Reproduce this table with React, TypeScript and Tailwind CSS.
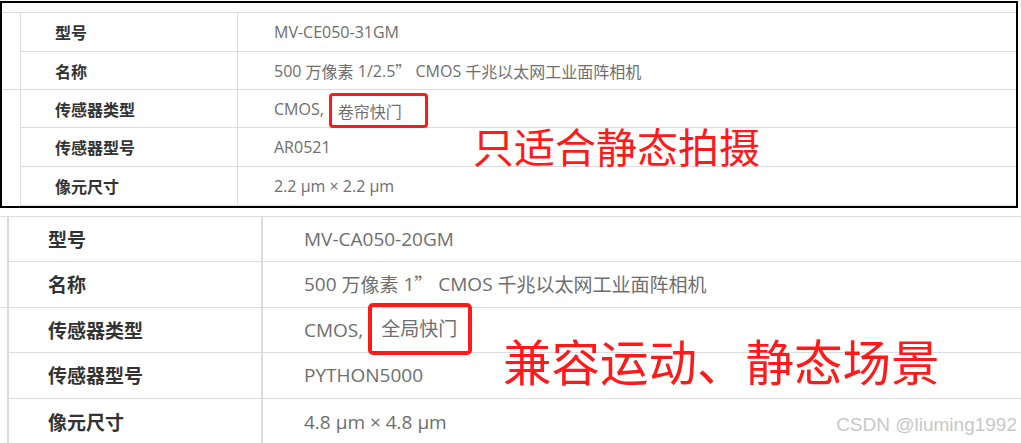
import React from "react";

const CJK = "font-['Noto_Sans_CJK_SC','Noto_Sans',sans-serif]";

type Row = { label: string; value: React.ReactNode; ext?: boolean; h: string };

function Table({
  rows,
  spacer,
  labelCls,
  valueCls,
  last,
}: {
  rows: Row[];
  spacer: string;
  labelCls: string;
  valueCls: string;
  last: boolean;
}) {
  return (
    <div className="flex flex-col border-t border-[#dcdcdc]">
      {rows.map((r, i) => (
        <div key={i} className={`flex ${r.h}`}>
          <div className={`${spacer} shrink-0 ${r.ext ? "border-b border-[#dcdcdc]" : ""}`} />
          <div className={`flex-1 flex ${i < rows.length - 1 || last ? "border-b border-[#dcdcdc]" : ""}`}>
            <div className={`${labelCls} shrink-0 flex items-center font-bold text-[#333] font-['Noto_Sans_CJK_SC','Noto_Sans',sans-serif]`}>
              {r.label}
            </div>
            <div className={`${valueCls} flex-1 flex items-center text-[#6e6e6e] whitespace-pre font-['Open_Sans','Noto_Sans_CJK_SC',sans-serif]`}>
              {r.value}
            </div>
          </div>
        </div>
      ))}
    </div>
  );
}

function Top() {
  const rows: Row[] = [
    { label: "型号", value: "MV-CE050-31GM", h: "h-[39px]" },
    {
      label: "名称",
      value: (
        <>
          500 <span className={CJK}>万像素</span> 1/2.5<span className={CJK}>”</span> CMOS{" "}
          <span className={CJK}>千兆以太网工业面阵相机</span>
        </>
      ),
      h: "h-[38px]",
      ext: true,
    },
    {
      label: "传感器类型",
      value: (
        <>
          CMOS,
          <span className={`ml-[5px] mt-[4px] inline-flex items-center h-[35px] pl-[6px] pr-[23px] border-[3px] border-[#ff1a1a] rounded-[4px] ${CJK}`}>
            卷帘快门
          </span>
        </>
      ),
      h: "h-[38px]",
    },
    { label: "传感器型号", value: "AR0521", h: "h-[39px]" },
    { label: "像元尺寸", value: "2.2 µm × 2.2 µm", h: "h-[39px]" },
  ];
  return (
    <div className="pt-px">
      <div className="relative w-[1018px] h-[207px] border-2 border-black pt-[9px]">
        <Table
          rows={rows}
          spacer="w-[18px]"
          labelCls="w-[218px] border-l border-r border-[#dcdcdc] pl-[34px] text-[16px]"
          valueCls="pl-[36px] text-[16px]"
          last
        />
        <div className={`absolute left-[471px] top-[114px] text-[41px] leading-[56px] text-[#ff1a1a] whitespace-nowrap ${CJK}`}>
          只适合静态拍摄
        </div>
      </div>
    </div>
  );
}

function Bottom() {
  const rows: Row[] = [
    { label: "型号", value: "MV-CA050-20GM", h: "h-[45px]" },
    {
      label: "名称",
      value: (
        <>
          500 <span className={CJK}>万像素</span> 1<span className={CJK}>”</span> CMOS{" "}
          <span className={CJK}>千兆以太网工业面阵相机</span>
        </>
      ),
      h: "h-[46px]",
      ext: true,
    },
    {
      label: "传感器类型",
      value: (
        <>
          CMOS,
          <span className={`ml-[5px] mt-[-3px] shrink-0 inline-flex items-center h-[52px] pl-[9px] pr-[11px] border-4 border-[#ff1a1a] rounded-[5px] ${CJK}`}>
            全局快门
          </span>
        </>
      ),
      h: "h-[45px]",
    },
    { label: "传感器型号", value: "PYTHON5000", h: "h-[46px]" },
    { label: "像元尺寸", value: "4.8 µm × 4.8 µm", h: "h-[46px]" },
  ];
  return (
    <div className="relative mt-2 w-[1021px] h-[227px]">
      <Table
        rows={rows}
        spacer="w-[7px]"
        labelCls="w-[256px] border-l-2 border-r-2 border-[#dcdcdc] pl-[39px] text-[19px]"
        valueCls="pl-[41px] text-[19px]"
        last={false}
      />
      <div className={`absolute left-[503px] top-[110px] text-[48.5px] leading-[68px] text-[#ff1a1a] whitespace-nowrap ${CJK}`}>
        兼容运动、静态场景
      </div>
      <div className="absolute right-1 bottom-[6px] text-[19px] leading-[24px] text-[#c8c8c8] whitespace-nowrap font-['Liberation_Sans',Arial,sans-serif]">
        CSDN @liuming1992
      </div>
    </div>
  );
}

export default function App() {
  return (
    <div className={`w-[1021px] h-[443px] bg-white overflow-hidden ${CJK}`}>
      <Top />
      <Bottom />
    </div>
  );
}
